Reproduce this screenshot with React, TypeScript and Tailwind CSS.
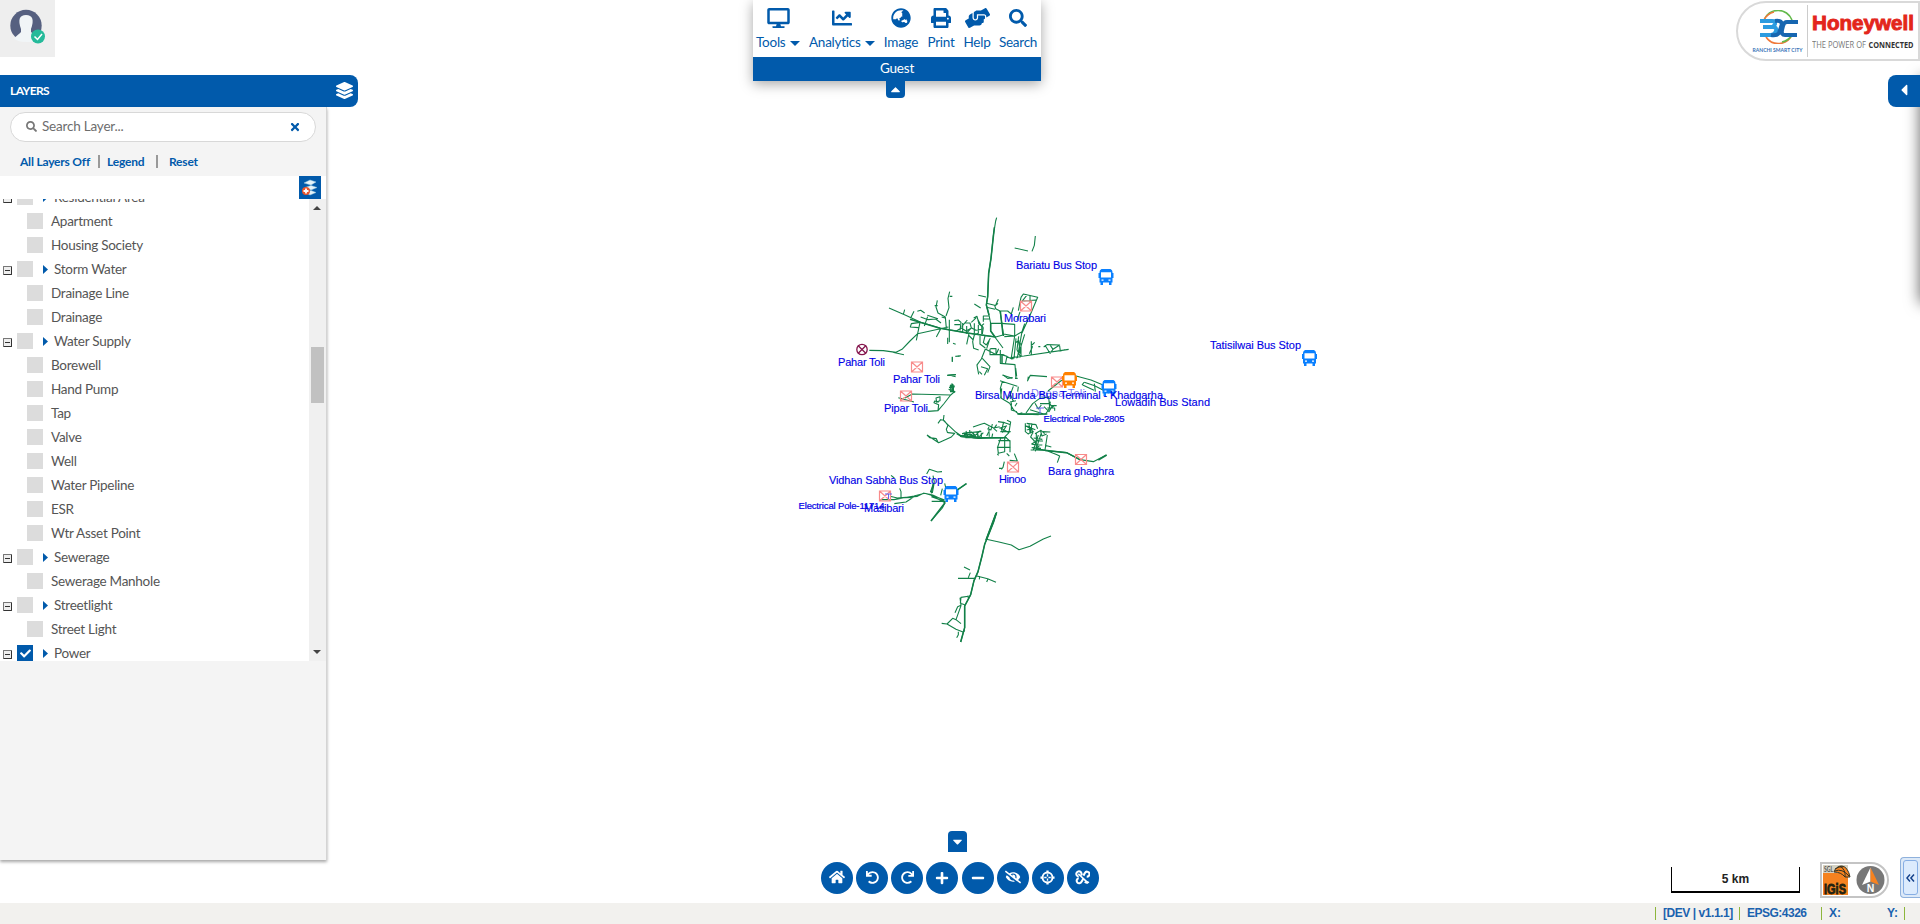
import type { ReactNode } from "react";
import {
  FaCaretDown, FaCaretLeft, FaCaretRight, FaCaretUp, FaCheck, FaChartLine, FaDesktop, FaEyeSlash,
  FaGlobeAsia, FaHandsHelping, FaHome, FaLayerGroup, FaMinus, FaPlus, FaPrint, FaRedo, FaSearch, FaTimes, FaUndo,
} from "react-icons/fa";

type Layer = { name: string; group?: boolean; on?: boolean };

const layers: Layer[] = [
  { name: "Residential Area", group: true },
  { name: "Apartment" },
  { name: "Housing Society" },
  { name: "Storm Water", group: true },
  { name: "Drainage Line" },
  { name: "Drainage" },
  { name: "Water Supply", group: true },
  { name: "Borewell" },
  { name: "Hand Pump" },
  { name: "Tap" },
  { name: "Valve" },
  { name: "Well" },
  { name: "Water Pipeline" },
  { name: "ESR" },
  { name: "Wtr Asset Point" },
  { name: "Sewerage", group: true },
  { name: "Sewerage Manhole" },
  { name: "Streetlight", group: true },
  { name: "Street Light" },
  { name: "Power", group: true, on: true },
];

function LayerRow({ layer }: { layer: Layer }) {
  return (
    <li className="flex h-6 shrink-0 items-center">
      {layer.group ? (
        <>
          <span className="ml-[3px] mt-[2px] flex size-[9px] items-center justify-center rounded-[1px] border border-[#777] border-b-[#333] border-r-[#333] bg-[#eee]">
            <span className="h-px w-[5px] bg-[#333]" />
          </span>
          <span className={layer.on ? "ml-[5px] flex size-4 items-center justify-center bg-[#015aab]" : "ml-[5px] size-4 bg-[#dcdcdc]"}>
            {layer.on && <FaCheck className="size-[11px] text-white" />}
          </span>
          <svg viewBox="0 0 5 9" className="ml-[10px] mt-px h-[9px] w-[5px] fill-[#015aab]"><path d="M0 0l5 4.500L0 9z" /></svg>
          <span className="ml-[6px]">{layer.name}</span>
        </>
      ) : (
        <>
          <span className="ml-[27px] size-4 bg-[#dcdcdc]" />
          <span className="ml-2">{layer.name}</span>
        </>
      )}
    </li>
  );
}

function LayersPanel() {
  return (
    <aside className="absolute left-0 top-[75px] w-[358px]">
      <header className="flex h-8 items-center justify-between rounded-r-lg bg-[#015aab] pl-2.5 pr-[5px] text-white">
        <h2 className="text-[12px] font-bold tracking-[-0.600px]">LAYERS</h2>
        <FaLayerGroup className="mb-0.5 size-[17px]" />
      </header>
      <div className="flex h-[753px] w-[327px] flex-col border-r border-[#d4d4d4] bg-[#f4f4f4] shadow-[0_2px_3px_rgba(0,0,0,0.35)]">
        <div className="ml-2.5 mt-[5px] flex h-[30px] w-[306px] shrink-0 items-center rounded-full border border-[#d8d8d8] bg-white pb-px pl-[15px] pr-[14px]">
          <FaSearch className="size-[11px] text-[#777]" />
          <span className="ml-[5px] flex-1 text-[13.500px] tracking-[-0.200px] text-[#6d6d6d]">Search Layer...</span>
          <FaTimes className="size-[12px] text-[#015aab]" />
        </div>
        <nav className="flex h-[34px] shrink-0 items-center pl-5 pt-[5px] text-[12px] font-bold tracking-[-0.200px] text-[#015aab]">
          <span className="w-[78px] whitespace-nowrap">All Layers Off</span>
          <span className="mb-px h-[13px] w-0.5 bg-[#999]" />
          <span className="ml-[7px] w-[42px]">Legend</span>
          <span className="mb-px ml-[7px] h-[13px] w-0.5 bg-[#999]" />
          <span className="ml-[11px]">Reset</span>
        </nav>
        <div className="flex h-[23px] shrink-0 justify-end bg-white pr-[5px]">
          <button className="flex h-[23px] w-[22px] items-center justify-center bg-[#015aab]">
            <svg viewBox="0 0 22 23" className="h-[23px] w-[22px]">
              <path d="M5 7l6-3 6 2-5 3zM6 11.500l6-2 6 2-6 2.500zM6 16.500l6-2 5 2-6 2.500z" fill="#e4f3fa" stroke="#a0cbdc" strokeWidth=".5" />
              <circle cx="7" cy="15" r="4" fill="#e8552c" />
              <path d="M7 12.500v5M4.500 15h5" stroke="#fff" strokeWidth="1.800" />
            </svg>
          </button>
        </div>
        <div className="flex h-[462px] shrink-0 bg-white">
          <ul className="-mt-[14px] flex h-[476px] flex-1 flex-col overflow-hidden text-[13.500px] tracking-[-0.270px] text-[#555] [clip-path:inset(14px_0_0_0)]">
            {layers.map((l) => <LayerRow key={l.name} layer={l} />)}
          </ul>
          <div className="flex w-[17px] flex-col items-center bg-[#f0f0f0] pr-px text-[#444]">
            <span className="mt-[7px] size-0 border-x-4 border-b-4 border-x-transparent border-b-[#444]" />
            <span className="mt-[137px] h-14 w-[13px] bg-[#c1c1c1]" />
            <span className="mb-[7px] mt-auto size-0 border-x-4 border-t-4 border-x-transparent border-t-[#444]" />
          </div>
        </div>
      </div>
    </aside>
  );
}

function Tool({ icon, label, menu, width }: { icon: ReactNode; label: string; menu?: boolean; width: string }) {
  return (
    <button className={"flex shrink-0 flex-col items-center " + width}>
      <span className="flex h-9 items-center justify-center">{icon}</span>
      <span className={menu ? "flex h-3 w-full items-center justify-between whitespace-nowrap" : "flex h-3 items-center whitespace-nowrap"}>
        {label}
        {menu && <span className="mt-0.5 size-0 border-x-[5px] border-t-[5px] border-x-transparent border-t-[#015aab]" />}
      </span>
    </button>
  );
}

function TopToolbar() {
  return (
    <div className="absolute left-[753px] top-0 flex w-72 flex-col items-center">
      <div className="w-full bg-white shadow-[0_3px_12px_rgba(0,0,0,0.35)]">
        <div className="flex h-[57px] pl-[3px] text-[13.500px] tracking-[-0.250px] text-[#015aab]">
          <Tool width="w-[44px]" label="Tools" menu icon={<FaDesktop className="h-5 w-[23px]" />} />
          <Tool width="ml-[9px] w-[66px]" label="Analytics" menu icon={<FaChartLine className="size-5" />} />
          <Tool width="ml-[7px] w-[38px]" label="Image" icon={<FaGlobeAsia className="size-5" />} />
          <Tool width="ml-[6px] w-[30px]" label="Print" icon={<FaPrint className="size-5" />} />
          <Tool width="ml-[7px] w-[28px]" label="Help" icon={<FaHandsHelping className="h-5 w-[25px]" />} />
          <Tool width="ml-[8px] w-[38px]" label="Search" icon={<FaSearch className="size-[18px]" />} />
        </div>
        <div className="flex h-6 items-center justify-center bg-[#015aab] pb-px text-[13.500px] tracking-[-0.200px] text-white">Guest</div>
      </div>
      <button className="mr-[3px] flex h-[17px] w-[19px] items-center justify-center rounded-b-[4px] bg-[#015aab] text-white">
        <FaCaretUp className="size-[15px]" />
      </button>
    </div>
  );
}

const network: { at: string; d: string }[] = [
  {
    at: "translate(820 200) scale(.33333)",
    d: `M530 53l-3 10-7 44-7 68-7 45-3 70-4 25M584 144l40 9M646 108l-3 28-7 18M475 286l23 5M463 312l19 12
    M207 324l50 22 45 21 60 18 80 14 85 12 22-6M250 343l4-14M273 352l9-18M352 301l-4 20 6 18 22 12 3 34M389 275l-5 20 3 28-9 25M389 289h8M344 317h9
    M292 334l10-3 12 8M322 346l32 10M313 378l10-28M302 351l22 8 23-2 16 12M300 367l-26 4-3 10 24 2M300 367l-7 34-23 22-24 25-18 9-38-5-42-1M218 457l34 7M293 401l-4 20M293 401l92-20M363 385l-14 26M365 351l10 3M388 359v68M383 413v19M399 430l8 3
    M403 362l12-2 8 7-3 25M403 374h17M425 380l17-20M435 369h15l4 15-12 13M454 367l15-14M447 400l-7 33M445 405l15 15M475 375v25l-12 5-5 20 3 20 15 5M490 382l-13-10-6-23-10 5M490 382l-3 20M490 365v-17h18M490 357h18M480 408v24l16 12M495 408l-5 20 9 7 12-20M410 392l14-8 14 9 17-9 13 7 17-3M428 369v30M440 378v24M463 370v30M474 359l10 19 8-7
    M499 315l8 30 5 25v23l17 24 20 27M499 310l25 6 3 10 13 7 7 47 4 28M500 322l25 6M535 298l-8 18 7-6M510 370h33M543 370l41 3v35l-31 2M537 333h26l11 9 6-20M551 402l33 6 22-13 8-24M600 336l-9 25M603 292l7-10 43 10-20 47-27 60M603 292l-8 40M622 284l-16 20M610 303l38-3M630 288v17M584 408l-10 65M588 415l-6 60M606 395l-14 79M614 403l-14 45-10 27M572 473l40-5 134-20M596 409l-5 40 11 23M586 429l10-8 5 40M603 430v40
    M628 461l10-22M634 424v40M636 435l8-8M655 440h6M671 441l10-7 38 1-20 13-9 12-15-24M699 448l-8-12M719 438l2 15 14-4M500 446l8-25M496 447l30 16 24 1 27 14M496 447l-12 30-14 19M487 475l23 25-7 18M483 500l20 6-10 20M471 496l5 27M486 523l-8-8M510 446v18h18v-18h-17M528 464l8-18M541 450v40l44 4 3 42M546 465l15 4-5 23M561 472l20 4M550 525l13 10 15-2M397 485v-15M413 469l10-2M382 526l26-2M395 527l12 3`,
  },
  {
    at: "translate(790 340) scale(.33333)",
    d: `M472 106l24-2M496 49l13-1M487 65V51M482 134l12 24M477 142l14-2M480 155h16M486 130v26M476 147l10 8 7-17-12-2 2 20M345 174l22-12 115 3 12-10M482 165l-21 27-17 20-30 2M444 212l2-18-14-6 2-5 12 4M440 188l-2-14 12-4v12l-12 4M325 173l47 13
    M462 225l-2 16 38 36 15 10 60 5M444 250l8-11 10 2M462 241l12 15-5 12 4 11M411 285l35 23 38-17 10-11-20-2M411 285l8 8 20 3 5 11
    M500 281l15 9 50 5 85-2M516 281l58-7M549 261l24-8 10-3 28 14 18-4M528 273l6 20M539 270l2 24M550 279l5 17M561 275l4 19M580 278l-12 12M596 260l2 30M607 252l-4 18-11-4M620 254l-8 12 9 8M526 293h123M522 284h25
    M624 245l20 3 18 6M628 265l23-8M641 246l-5 20 21 12-12 12 14 13M651 241l11 5-5 30M631 275h31M633 292l-11 32M644 290v45l-19 5-2-18M625 302h35v35M622 342l4 4M650 340l8 8M622 322h40M632 262l6 15 10-18
    M673 341l9 22-23-2M643 365l-4 17-5 6M637 385h-10M303 406l10 8M410 402l8-14 25 8 13-1M429 407l4 19-8 20-4 10M426 440l6-8-5 27M272 479h40l60-11 32-8 30 9 30 11M320 474l50-2M300 469l22 5 60-5 20-10M329 445l4 10v19M313 491l35-5 22-14M404 460l24 5 34 16M418 463l47 25-8 16-34 39M424 470l43 15M425 484h42M452 466l5-20M464 430l3 12 16 22 20-15 27-18M474 443l10 16M588 600l30-80`,
  },
  {
    at: "translate(960 340) scale(.33333)",
    d: `M127 105l30 10M170 109l-3-25M165 115h8M120 122l52 17M127 125l-6 20 3 30 25 15 12 20 15 12 60 2M122 175l3-30M160 139l-9 25-10 15M175 140l-2 15M152 166l8 18M154 185v25l17 5M150 186l18-4M171 189l-6 10M202 124l9-18 50 4M205 110l-2 13
    M264 153l38-30 35-18 56 15 60 25M373 127l31 10 42 22M368 135l34 16M403 131l3 24M372 127l-6 8M198 219l20-28 20-15 28-5 3 33-12 18-80 1M175 222l12-4M225 190l10 17 9-12M240 191h29l8 10 8-5M252 200l15 15 10-18M271 185l-4 24M262 204h22v8M272 197h18M210 209l39 12
    M200 250l28 4 5 12M196 250v25l10 8M196 257l30 12M207 253l3 24M216 250l-5 30M200 270l15-4 4 14M203 282l18-8M225 281l18-10 11 10M219 276l-7 15 16 17M235 285l-15 45M244 279l-18 55M229 280v48M221 294l26 4M220 303h29M217 313l30 2M215 323l28 2M212 330l35-1M241 270l5 18 14-6M249 275l22 1M262 285l-7 45M255 316l19 5M214 313l24-15M220 327l18-8
    M226 323l31 9 63 6 40 21 40 6 39-20M321 338l-20 -1M261 332l30 12 8 4-7 20M7 287l33 6 90 1M10 280l24-4 12 10 15-14M52 276l3 16M64 278v16M86 276l-6 12M98 281l-3 14`,
  },
  {
    at: "translate(900 480) scale(.33333)",
    d: `M290 97l-10 31-18 45-8 20-8 35-12 47-12 27-10 42-18 34v65l-12 43M259 178l38 8 37 9 23 14 33-10 40-22 23-9M192 261l18 9M211 278l-6 15M174 295h50M228 287l35 9 25 11M239 288l-1 10M264 297l-4 9M210 348l-27 4-2 18 13 4M203 347l3 10M180 353l3 23-10 4-8 18M183 377l-15 42M168 419l15 12M168 419l-10-4-17 17 27 16 21 8 6-4M141 432l-16-2M175 455v9l-5 9`,
  },
];

const heavy = [
  { at: "translate(820 200) scale(.33333)", d: "M523 82l-10 93-7 45-3 70-4 25 8 30M270 358l90 27 82 14 85 12M541 333l8 72M512 370v23l15 20M486 377v25M546 465v25" },
  { at: "translate(790 340) scale(.33333)", d: "M510 289l65 5M423 543l42-55M498 453l31-22M430 430l-6 30M588 600l30-80M488 132l2 23M540 284l18 6" },
  { at: "translate(900 480) scale(.33333)", d: "M290 97l-10 31-18 45-8 20-8 35-12 47-12 27-10 42-18 34v65l-12 43" },
  { at: "translate(960 340) scale(.33333)", d: "M172 222h90M228 328l92 10 40 21M415 360l25-15M200 258l14 10" },
];

function Bus({ x, y, color = "#0a80ff" }: { x: number; y: number; color?: string }) {
  return (
    <g transform={`translate(${x} ${y})`} fill={color}>
      <path d="M3 0h9q2 1 2 3v10.500H1V3q0-2 2-3zM0 4h1v5H0zM14 4h1v5h-1zM2 13h2.500v3H2zM10.500 13H13v3h-2.500z" />
      <path d="M2.500 3.200h10v5.300h-10zM3 10.500h2v1.200H3zM10 10.500h2v1.200h-2z" fill="#fff" />
    </g>
  );
}

const substations = [[1026, 306], [917, 367], [906, 396], [885, 496], [1057, 382], [1081, 459.500], [1013, 467]];

const labels: [string, number, number, number][] = [
  ["Bariatu Bus Stop", 1016, 269, 81],
  ["Morabari", 1004, 322, 42],
  ["Tatisilwai Bus Stop", 1210, 349, 91],
  ["Pahar Toli", 838, 366, 47],
  ["Pahar Toli", 893, 383, 47],
  ["Pipar Toli", 884, 412, 44],
  ["Birsa Munda Bus Terminal - Khadgarha", 975, 399, 188],
  ["Lowadih Bus Stand", 1115, 406, 95],
  ["Hinoo", 999, 483, 27],
  ["Bara ghaghra", 1048, 475, 66],
  ["Vidhan Sabha Bus Stop", 829, 484, 114],
  ["Masibari", 864, 512, 40],
];

function MapCanvas() {
  return (
    <svg width="1920" height="924" viewBox="0 0 1920 924" className="block font-['Liberation_Sans',sans-serif]">
      <g fill="none" stroke="#128048" strokeLinejoin="round">
        {network.map((n) => <path key={n.at} transform={n.at} d={n.d} strokeWidth="3.300" />)}
        {heavy.map((n) => <path key={n.at} transform={n.at} d={n.d} strokeWidth="4.600" />)}
      </g>
      <g fill="none" stroke="#85154d" strokeWidth="1.300">
        <circle cx="862" cy="349.500" r="5.200" />
        <path d="m858 345.500 8 8m0-8-8 8" />
      </g>
      <g fill="none" stroke="#f88b8b" strokeWidth="1.200">
        {substations.map(([x, y]) => (
          <path key={`${x}-${y}`} d={`M${x - 5.5} ${y - 5}h11v10h-11zl11 10m0-10-11 10`} />
        ))}
      </g>
      <Bus x={1098.5} y={269} />
      <Bus x={1302} y={350} />
      <Bus x={1101.5} y={380} />
      <Bus x={943.5} y={486} />
      <Bus x={1062} y={372} color="#ff8000" />
      <g fill="#0000e6" fontSize="11">
        <text x="1031" y="397" textLength="54" fillOpacity=".55">Deepa Toli</text>
        {labels.map(([t, x, y, w]) => (
          <text key={`${t}-${x}`} x={x} y={y} textLength={w} stroke="#0000e6" strokeWidth=".12">{t}</text>
        ))}
        <g fontSize="9.500" stroke="#0000e6" strokeWidth=".2">
          <text x="1043.500" y="422" textLength="81">Electrical Pole-2805</text>
          <text x="798.500" y="509" textLength="86">Electrical Pole-11714</text>
        </g>
        <path d="M1036 408h8m-4 0v6M885 494h7m-3.500 0v5" stroke="#6666f0" fill="none" />
      </g>
    </svg>
  );
}

function BrandBadge() {
  return (
    <div className="absolute right-0 top-px flex h-[60px] w-[184px] items-center rounded-l-[30px] border-2 border-[#d9d9d9] bg-white">
      <div className="ml-[14px] flex w-[52px] flex-col items-center pt-0.5">
        <svg viewBox="0 0 44 34" className="h-[34px] w-[44px]" fill="none">
          <path d="M8 10a15 15 0 0 1 28 0" stroke="#62b94a" strokeWidth="1.600" />
          <path d="M8 10a15 15 0 0 1 10-8M36 25a15 15 0 0 1-26 2" stroke="#f0793a" strokeWidth="1.600" />
          <path d="M36 25a15 15 0 0 1-10 7" stroke="#62b94a" strokeWidth="1.600" />
          <path d="M4 11h12q4 0 3 3l-2 3H7m10 0q4 0 3 4t-5 4H4" stroke="#2b9be0" strokeWidth="4" />
          <path d="M19 11q6-1 7 3l-3 9q-2 3-8 2M42 12H31q-3 0-4 4l-1 4q-1 5 3 5h12" stroke="#1766b0" strokeWidth="4" />
        </svg>
        <svg viewBox="0 0 52 8" className="mt-0.5 h-2 w-[52px]">
          <text x="0.500" y="6.300" fontSize="5.500" textLength="50" lengthAdjust="spacingAndGlyphs" className="fill-[#3973b8] font-bold">RANCHI SMART CITY</text>
        </svg>
      </div>
      <div className="ml-[3px] flex h-[52px] w-[110px] flex-col border-l border-[#ccc] pl-1">
        <svg viewBox="0 0 104 50" className="mt-0.5 h-[50px] w-[104px]">
          <text x="0" y="22.500" textLength="102" lengthAdjust="spacingAndGlyphs" className="fill-[#e3261b] font-['Liberation_Sans',sans-serif] font-bold" fontSize="20" stroke="#e3261b" strokeWidth=".9">Honeywell</text>
          <text x="0" y="41" textLength="54" lengthAdjust="spacingAndGlyphs" className="fill-[#777] font-['Open_Sans',sans-serif]" fontSize="9.300">THE POWER OF</text>
          <text x="56.500" y="41" textLength="45" lengthAdjust="spacingAndGlyphs" className="fill-[#333] font-['Open_Sans',sans-serif] font-bold" fontSize="9.300">CONNECTED</text>
        </svg>
      </div>
    </div>
  );
}

function CrosshairIcon() {
  return (
    <svg viewBox="0 0 16 16" className="mb-0.5 size-[15px]" fill="none" stroke="currentColor">
      <circle cx="8" cy="8" r="5.300" strokeWidth="2" />
      <path d="M8 .5v3M8 12.500v3M.5 8h3M12.500 8h3" strokeWidth="2.400" />
      <path d="M8 4.500V7M8 9v2.500M4.500 8H7M9 8h2.500" strokeWidth="1.500" />
    </svg>
  );
}

function UnlinkIcon() {
  return (
    <svg viewBox="0 0 16 16" className="mb-0.5 size-[15px]" fill="none" stroke="currentColor" strokeWidth="2.200">
      <path d="M6.500 5.800A2.800 2.800 0 1 0 4 7M9 6l1.500-2.700A2.600 2.600 0 1 1 12.500 7M4 8.800A2.700 2.700 0 1 0 7 12.500L9 9M10.500 12.500a2.500 2.500 0 0 0 4 0" />
      <path d="m3.500 4 10.500 10" strokeWidth="1.800" />
    </svg>
  );
}

function MapControls() {
  const icons: ReactNode[] = [
    <FaHome className="mb-0.5 size-[16px]" />, <FaUndo className="mb-0.5 size-[13px]" />, <FaRedo className="mb-0.5 size-[13px]" />,
    <FaPlus className="mb-px size-[14px]" />, <FaMinus className="mb-px size-[14px]" />, <FaEyeSlash className="mb-0.5 size-[16px]" />,
    <CrosshairIcon />, <UnlinkIcon />,
  ];
  return (
    <div className="absolute left-[821px] top-[831px] flex w-[278px] flex-col items-center">
      <button className="mr-[5px] flex h-[21px] w-[19px] items-center justify-center rounded-t-[4px] bg-[#015aab] text-white">
        <FaCaretDown className="size-[15px]" />
      </button>
      <div className="mt-2.5 flex w-full justify-between">
        {icons.map((icon, i) => (
          <button key={i} className="flex size-8 items-center justify-center rounded-full bg-[#015aab] text-white">{icon}</button>
        ))}
      </div>
    </div>
  );
}

function IgisBadge() {
  return (
    <svg viewBox="0 0 69 36" className="absolute left-[1820px] top-[862px] h-9 w-[69px]">
      <path d="M1 1h50a17 17 0 0 1 0 34H1z" fill="#fff" stroke="#c4c4c4" strokeWidth="2" />
      <path d="M3 3h25v30H3z" fill="#f58220" />
      <path d="M3 3h25v8H3z" fill="#d5d2c3" />
      <text x="4" y="9.500" fontSize="7" textLength="9" lengthAdjust="spacingAndGlyphs" fill="#555" className="font-bold">SGL</text>
      <path d="M14 10q2-6 8-6 6 1 8 11l-5 0q-4-5-11-5z" fill="#f58220" stroke="#332" strokeWidth="1" />
      <path d="M15 9q7-3 14 5M20 4q6 4 5 11M15 7q4-3 8-2" fill="none" stroke="#332" strokeWidth="1" />
      <text x="4" y="32" fontSize="14.500" textLength="22" lengthAdjust="spacingAndGlyphs" fill="#221" stroke="#221" strokeWidth=".8" className="font-['Liberation_Sans',sans-serif] font-bold">IGiS</text>
      <circle cx="50.500" cy="18" r="14" fill="#777" />
      <path d="M50.500 5.500 42 23l8.500-3.500z" fill="#fff" />
      <path d="M50.500 5.500 59 23l-8.500-3.500z" fill="#f58220" />
      <text x="46.800" y="29.500" fontSize="10.500" fill="#fff" className="font-['Liberation_Sans',sans-serif] font-bold">N</text>
    </svg>
  );
}

export default function App() {
  return (
    <main className="relative flex h-[924px] w-[1920px] flex-col overflow-hidden bg-white font-['Lato',sans-serif]">
      <section className="h-[903px] shrink-0 overflow-hidden">
        <MapCanvas />
      </section>
      <footer className="flex h-[21px] shrink-0 items-center bg-[#f2f1ee] pb-px pl-[1655px] font-['Liberation_Sans',sans-serif] text-[12px] font-bold text-[#1a62ae]">
        <span className="flex h-[13px] w-[84px] items-center whitespace-nowrap border-l border-[#8db63c] pl-[7px] tracking-[-0.450px]">[DEV | v1.1.1]</span>
        <span className="flex h-[13px] w-[82px] items-center border-l border-[#8db63c] pl-[7px] tracking-[-0.500px]">EPSG:4326</span>
        <span className="flex h-[13px] w-[84px] items-center justify-between border-x border-[#8db63c] pl-[7px] pr-[6px]">
          <span>X:</span>
          <span>Y:</span>
        </span>
      </footer>

      <div className="absolute left-0 top-0 flex h-[57px] w-[55px] bg-[#eee]">
        <svg viewBox="0 0 55 57" className="h-[57px] w-[55px]">
          <circle cx="26" cy="25.500" r="15.700" fill="#566080" />
          <path d="M14 38q5-4 7-6v-3q-5-14 5-14t5 14v3l6 5q2 5-11 5-9 0-12-4z" fill="#f1f5f7" />
          <circle cx="38" cy="36.500" r="7" fill="#25ba9a" />
          <path d="m34.500 36.500 3 3 4.500-5.500" fill="none" stroke="#fff" strokeWidth="1.500" />
        </svg>
      </div>

      <TopToolbar />
      <BrandBadge />
      <LayersPanel />

      <div className="absolute left-full top-[75px] h-[225px] w-10 shadow-[0_3px_15px_rgba(0,0,0,0.6)]" />
      <button className="absolute right-0 top-[75px] flex h-8 w-8 items-center justify-center rounded-l-lg bg-[#015aab] pb-0.5 text-white">
        <FaCaretLeft className="size-[18px]" />
      </button>

      <MapControls />
      <div className="absolute left-[1671px] top-[867px] flex h-[26px] w-[129px] items-center justify-center border-x border-b-2 border-black font-['Liberation_Sans',sans-serif] text-[12px] font-bold text-[#222]">5 km</div>
      <IgisBadge />
      <div className="absolute right-0 top-[857px] flex h-[41px] w-5 items-center justify-end rounded-l border border-r-0 border-[#8fb1dc] bg-[#dce9f8]">
        <span className="mr-0.5 flex h-[35px] w-[15px] items-center justify-center rounded-[3px] border border-[#86aee4] bg-[#dcebfd] text-[#15428b]">
          <svg viewBox="0 0 9 8" className="h-2 w-[9px]" fill="none" stroke="currentColor" strokeWidth="1.500"><path d="M4 .5.900 4 4 7.500M8 .5 4.900 4 8 7.500" /></svg>
        </span>
      </div>
    </main>
  );
}
